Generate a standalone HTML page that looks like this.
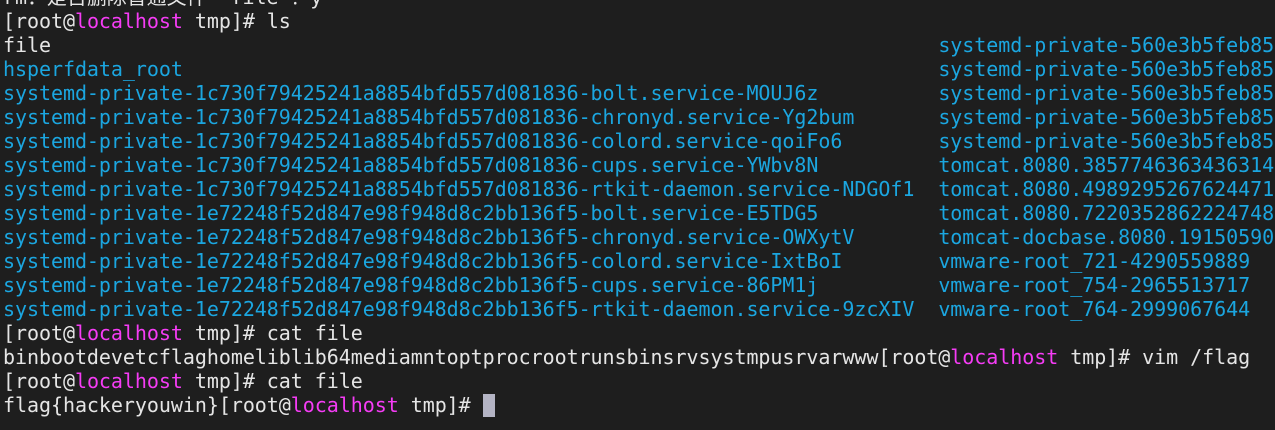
<!DOCTYPE html>
<html><head><meta charset="utf-8"><style>
html,body{margin:0;padding:0;background:#1e1e1e;width:1275px;height:430px;overflow:hidden}
pre{position:absolute;left:3px;top:-15px;margin:0;font:20px/24px "DejaVu Sans Mono","Liberation Mono","Noto Sans CJK SC",monospace;letter-spacing:-0.05px;color:#e5e5e5;white-space:pre}
.b{color:#1ba6e0}.m{color:#f53cf5}
.c{display:inline-block;width:12px;height:23px;background:#b4b4c4;vertical-align:-5px}
</style></head><body><pre>rm：是否删除普通文件 'file'？y
[root@<span class="m">localhost</span> tmp]# ls
file                                                                          <span class="b">systemd-private-560e3b5feb85</span>
<span class="b">hsperfdata_root</span>                                                               <span class="b">systemd-private-560e3b5feb85</span>
<span class="b">systemd-private-1c730f79425241a8854bfd557d081836-bolt.service-MOUJ6z</span>          <span class="b">systemd-private-560e3b5feb85</span>
<span class="b">systemd-private-1c730f79425241a8854bfd557d081836-chronyd.service-Yg2bum</span>       <span class="b">systemd-private-560e3b5feb85</span>
<span class="b">systemd-private-1c730f79425241a8854bfd557d081836-colord.service-qoiFo6</span>        <span class="b">systemd-private-560e3b5feb85</span>
<span class="b">systemd-private-1c730f79425241a8854bfd557d081836-cups.service-YWbv8N</span>          <span class="b">tomcat.8080.3857746363436314</span>
<span class="b">systemd-private-1c730f79425241a8854bfd557d081836-rtkit-daemon.service-NDGOf1</span>  <span class="b">tomcat.8080.4989295267624471</span>
<span class="b">systemd-private-1e72248f52d847e98f948d8c2bb136f5-bolt.service-E5TDG5</span>          <span class="b">tomcat.8080.7220352862224748</span>
<span class="b">systemd-private-1e72248f52d847e98f948d8c2bb136f5-chronyd.service-OWXytV</span>       <span class="b">tomcat-docbase.8080.19150590</span>
<span class="b">systemd-private-1e72248f52d847e98f948d8c2bb136f5-colord.service-IxtBoI</span>        <span class="b">vmware-root_721-4290559889</span>
<span class="b">systemd-private-1e72248f52d847e98f948d8c2bb136f5-cups.service-86PM1j</span>          <span class="b">vmware-root_754-2965513717</span>
<span class="b">systemd-private-1e72248f52d847e98f948d8c2bb136f5-rtkit-daemon.service-9zcXIV</span>  <span class="b">vmware-root_764-2999067644</span>
[root@<span class="m">localhost</span> tmp]# cat file
binbootdevetcflaghomeliblib64mediamntoptprocrootrunsbinsrvsystmpusrvarwww[root@<span class="m">localhost</span> tmp]# vim /flag
[root@<span class="m">localhost</span> tmp]# cat file
flag{hackeryouwin}[root@<span class="m">localhost</span> tmp]# <span class="c"></span></pre></body></html>
